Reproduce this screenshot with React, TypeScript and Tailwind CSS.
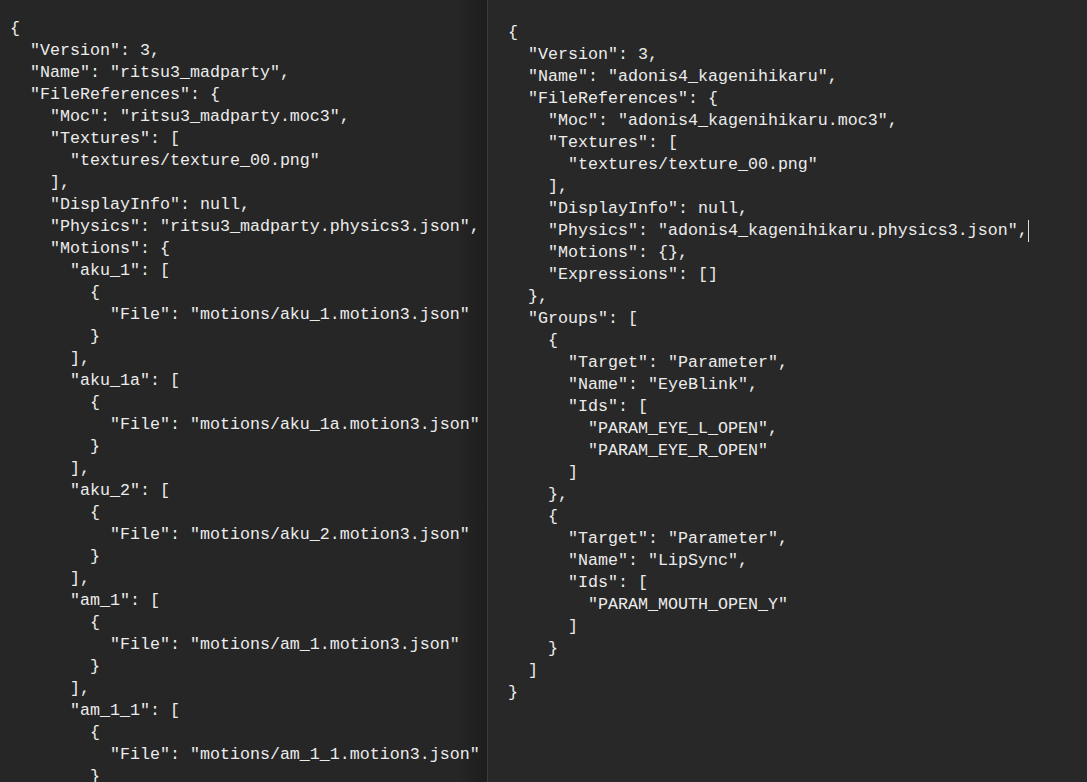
const leftJson = `{
  "Version": 3,
  "Name": "ritsu3_madparty",
  "FileReferences": {
    "Moc": "ritsu3_madparty.moc3",
    "Textures": [
      "textures/texture_00.png"
    ],
    "DisplayInfo": null,
    "Physics": "ritsu3_madparty.physics3.json",
    "Motions": {
      "aku_1": [
        {
          "File": "motions/aku_1.motion3.json"
        }
      ],
      "aku_1a": [
        {
          "File": "motions/aku_1a.motion3.json"
        }
      ],
      "aku_2": [
        {
          "File": "motions/aku_2.motion3.json"
        }
      ],
      "am_1": [
        {
          "File": "motions/am_1.motion3.json"
        }
      ],
      "am_1_1": [
        {
          "File": "motions/am_1_1.motion3.json"
        }
      ],`

const rightTop = `{
  "Version": 3,
  "Name": "adonis4_kagenihikaru",
  "FileReferences": {
    "Moc": "adonis4_kagenihikaru.moc3",
    "Textures": [
      "textures/texture_00.png"
    ],
    "DisplayInfo": null,
    "Physics": "adonis4_kagenihikaru.physics3.json",`

const rightBottom = `    "Motions": {},
    "Expressions": []
  },
  "Groups": [
    {
      "Target": "Parameter",
      "Name": "EyeBlink",
      "Ids": [
        "PARAM_EYE_L_OPEN",
        "PARAM_EYE_R_OPEN"
      ]
    },
    {
      "Target": "Parameter",
      "Name": "LipSync",
      "Ids": [
        "PARAM_MOUTH_OPEN_Y"
      ]
    }
  ]
}`

export default function App() {
  return (
    <div className="flex h-screen overflow-hidden font-['Liberation_Mono',monospace] text-[16.67px] leading-[22px] text-[#ececec]">
      {/* left file */}
      <div className="w-[487px] shrink-0 overflow-hidden bg-[linear-gradient(to_right,#262626_0px,#262626_455px,#1d1d1d_487px)] pt-[18px] pl-[10px]">
        <pre className="font-[inherit] whitespace-pre">{leftJson}</pre>
      </div>
      <div className="w-px shrink-0 bg-[#3c3c3c]" />
      {/* right file */}
      <div className="flex-1 overflow-hidden bg-[#282828] pt-[22px] pl-5">
        <pre className="font-[inherit] whitespace-pre">
          {rightTop}
          <span className="inline-block h-[22px] w-px align-top bg-[#dcdcdc]" />
          {"\n"}
          {rightBottom}
        </pre>
      </div>
    </div>
  )
}
